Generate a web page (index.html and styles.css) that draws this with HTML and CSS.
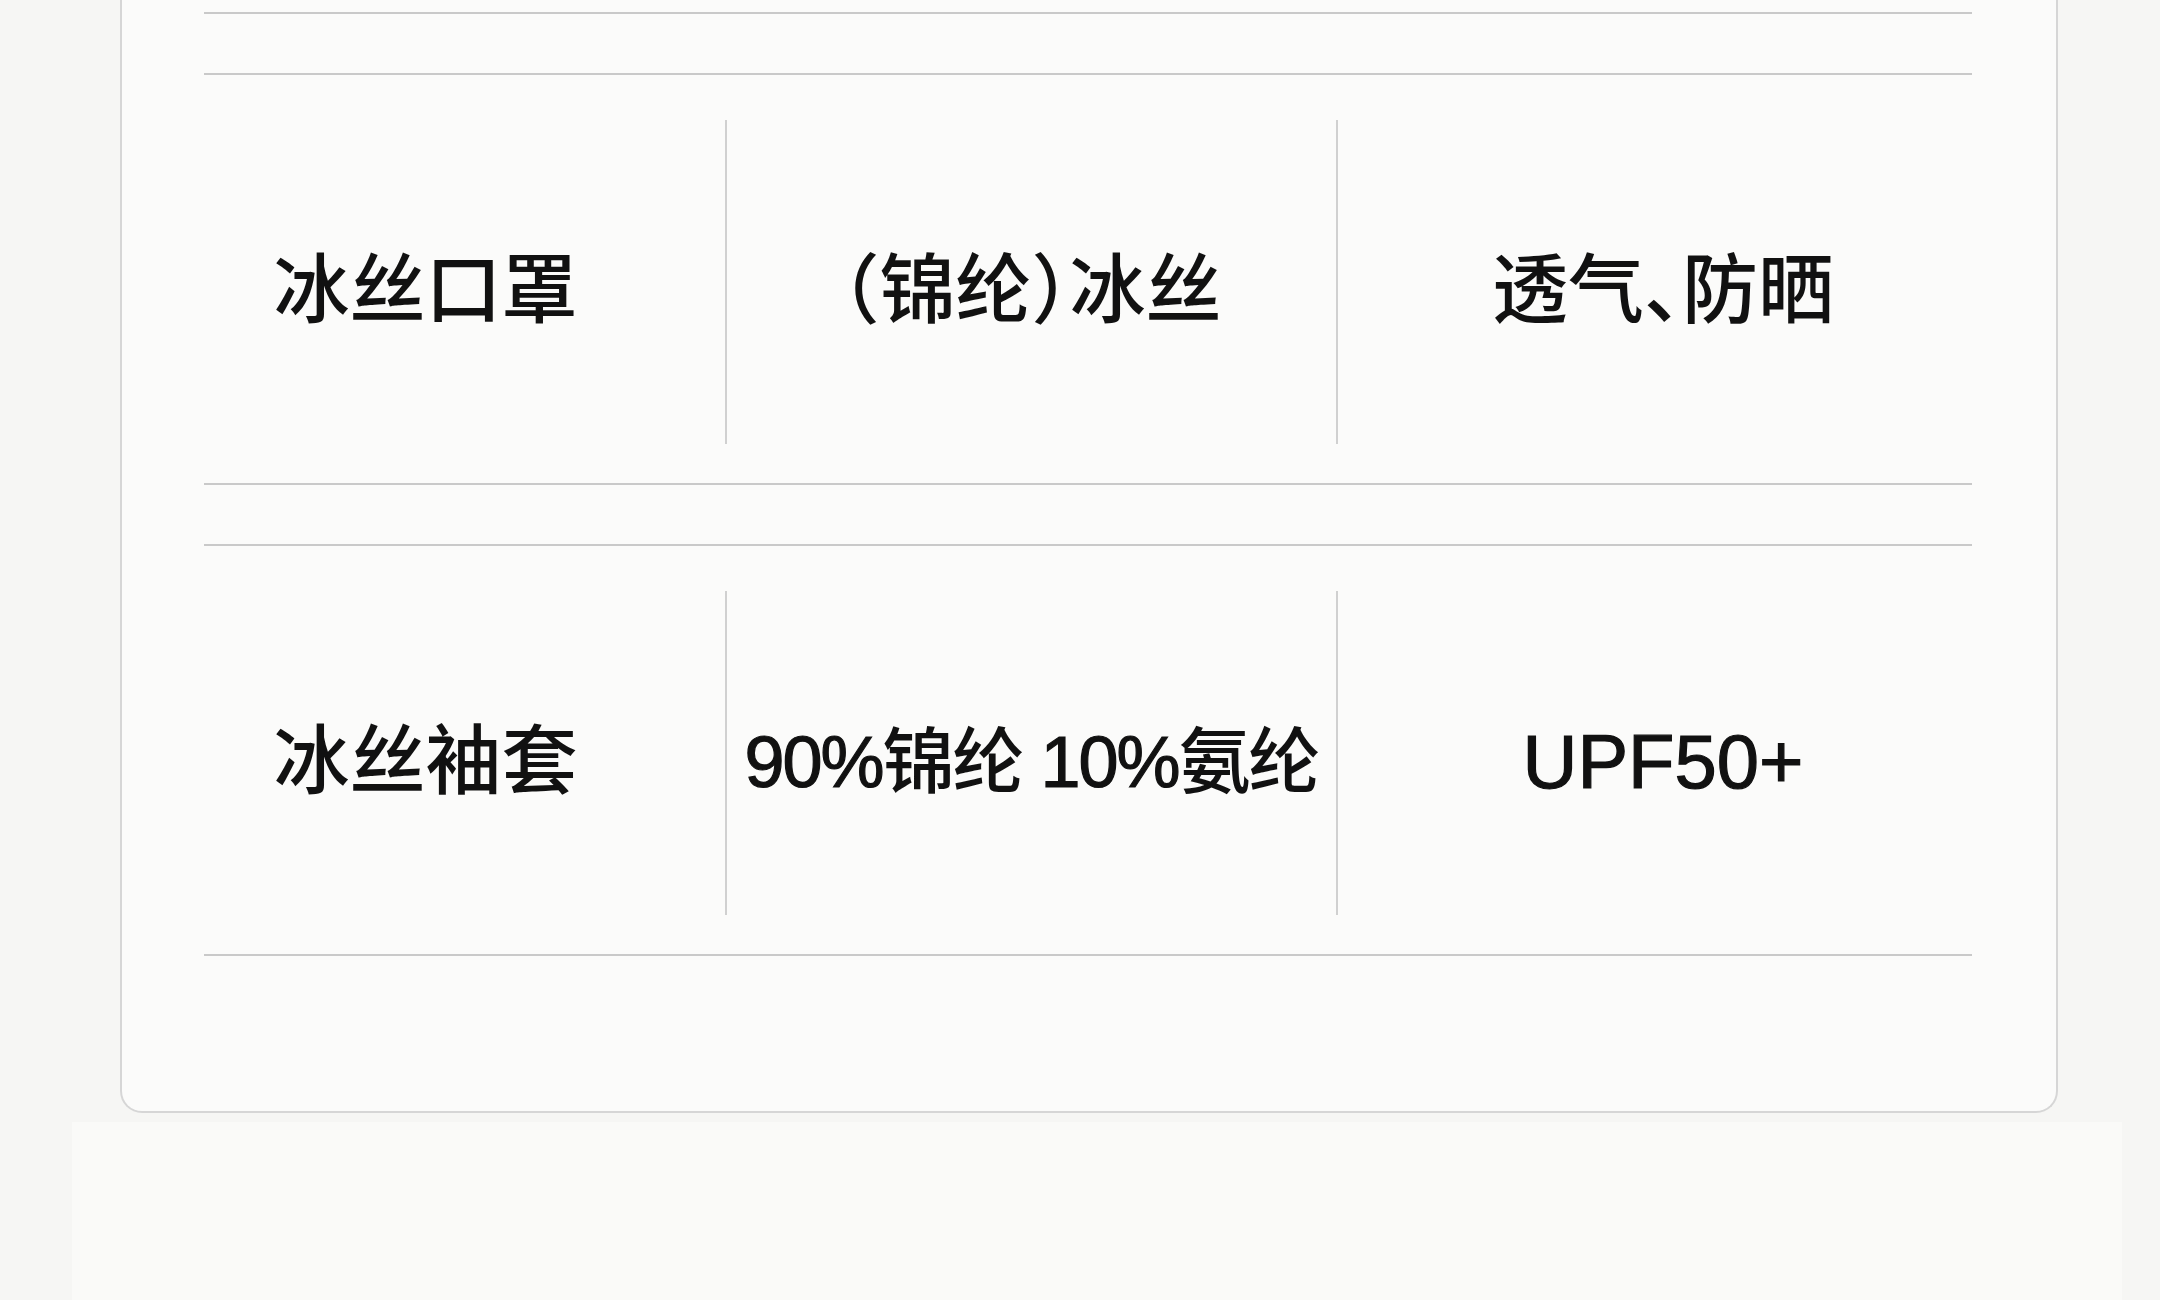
FILE: index.html
```html
<!DOCTYPE html>
<html lang="zh-CN">
<head>
<meta charset="utf-8">
<title>冰丝产品</title>
<link rel="stylesheet" href="styles.css">
</head>
<body>
<div class="page">
  <div class="card">
    <div class="rule"></div>
    <div class="row">
      <div class="cell cell-name"><span>冰丝口罩</span></div>
      <div class="cell cell-mat"><span>（锦纶）冰丝</span></div>
      <div class="cell cell-feat"><span>透气、防晒</span></div>
    </div>
    <div class="row">
      <div class="cell cell-name"><span>冰丝袖套</span></div>
      <div class="cell cell-mat"><span class="tight"><b class="lat">90%</b>锦纶 <b class="lat">10%</b>氨纶</span></div>
      <div class="cell cell-feat"><span class="lat">UPF50+</span></div>
    </div>
  </div>
  <div class="lower"></div>
</div>
</body>
</html>
```

FILE: styles.css
```css
html, body {
  margin: 0;
  padding: 0;
}
body {
  background: #f6f6f4;
  width: 2160px;
  height: 1300px;
  overflow: hidden;
  font-family: "Liberation Sans", "Noto Sans CJK SC", sans-serif;
  color: #111;
}
.page {
  display: flex;
  flex-direction: column;
  height: 1300px;
}
.card {
  margin-left: 120px;
  width: 1938px;
  box-sizing: border-box;
  background: #fbfbfa;
  border: 2px solid #d6d6d6;
  border-top: 0;
  border-radius: 0 0 22px 22px;
  padding: 12px 84px 155px 82px;
}
.rule {
  height: 2px;
  background: #c9c9c9;
}
.row {
  margin-top: 59px;
  height: 412px;
  box-sizing: border-box;
  border-top: 2px solid #c9c9c9;
  border-bottom: 2px solid #c9c9c9;
  display: grid;
  grid-template-columns: 521px 611px 1fr;
  padding: 45px 0 39px;
}
.cell {
  display: flex;
  align-items: center;
  justify-content: center;
  font-size: 76px;
  font-weight: 500;
  line-height: 1;
  white-space: nowrap;
  font-feature-settings: "halt";
}
.cell + .cell {
  border-left: 2px solid #d0d0d0;
}
.cell > span {
  padding-top: 18px;
}
.cell-name {
  padding-right: 78px;
}
.cell-feat {
  padding-left: 16px;
}
.lat {
  font-weight: 400;
  -webkit-text-stroke: 1.2px #111;
}
.tight {
  font-size: 72px;
  letter-spacing: -2px;
}
.lower {
  margin: 9px 0 0 72px;
  width: 2050px;
  flex: 1;
  background: #fafaf8;
}
```
